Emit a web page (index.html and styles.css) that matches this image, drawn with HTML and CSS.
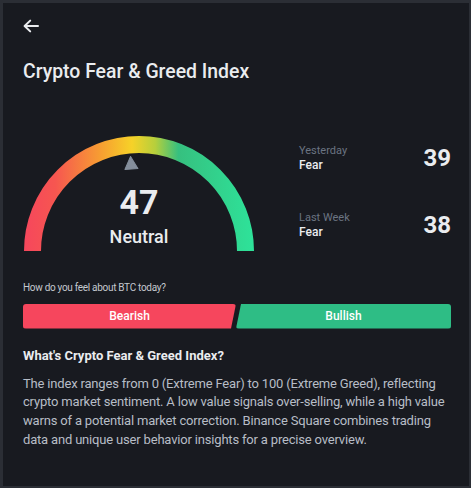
FILE: index.html
```html
<!DOCTYPE html>
<html lang="en">
<head>
<meta charset="utf-8">
<title>Crypto Fear &amp; Greed Index</title>
<link rel="stylesheet" href="styles.css">
</head>
<body>
<div class="card">
  <svg class="back" width="16" height="14" viewBox="0 0 16 14" aria-label="Back">
    <path d="M15 7H2M7.2 1.6L1.6 7l5.6 5.4" fill="none" stroke="#eaecef" stroke-width="2" stroke-linecap="round" stroke-linejoin="round"/>
  </svg>
  <h1 class="title">Crypto Fear &amp; Greed Index</h1>

  <div class="gauge-row">
    <div class="gauge">
      <svg class="gauge-arc" width="232" height="116" viewBox="0 0 232 116">
        <defs>
          <linearGradient id="g" x1="0" y1="0" x2="232" y2="0" gradientUnits="userSpaceOnUse">
            <stop offset="0" stop-color="#f6465d"/>
            <stop offset="0.14" stop-color="#f65650"/>
            <stop offset="0.34" stop-color="#f7a031"/>
            <stop offset="0.47" stop-color="#f6d228"/>
            <stop offset="0.57" stop-color="#b6cf3c"/>
            <stop offset="0.67" stop-color="#36c07f"/>
            <stop offset="1" stop-color="#2ee39a"/>
          </linearGradient>
        </defs>
        <path d="M9.5 115 A106.5 106.5 0 0 1 222.5 115" fill="none" stroke="url(#g)" stroke-width="17"/>
        <polygon points="108,20.5 114.5,33 101.5,33" fill="#848e9c" stroke="#848e9c" stroke-width="1" stroke-linejoin="round" transform="rotate(-4 108 27)"/>
      </svg>
      <div class="gauge-text">
        <div class="gauge-value">47</div>
        <div class="gauge-label">Neutral</div>
      </div>
    </div>

    <div class="history">
      <div class="hist-row">
        <div class="hist-text">
          <div class="hist-label">Yesterday</div>
          <div class="hist-state">Fear</div>
        </div>
        <div class="hist-value">39</div>
      </div>
      <div class="hist-row">
        <div class="hist-text">
          <div class="hist-label">Last Week</div>
          <div class="hist-state">Fear</div>
        </div>
        <div class="hist-value">38</div>
      </div>
    </div>
  </div>

  <p class="question">How do you feel about BTC today?</p>
  <div class="vote">
    <button class="btn bearish">Bearish</button>
    <button class="btn bullish">Bullish</button>
  </div>

  <h2 class="subtitle">What's Crypto Fear &amp; Greed Index?</h2>
  <p class="desc">The index ranges from 0 (Extreme Fear) to 100 (Extreme Greed), reflecting crypto market sentiment. A low value signals over-selling, while a high value warns of a potential market correction. Binance Square combines trading data and unique user behavior insights for a precise overview.</p>
</div>
</body>
</html>
```

FILE: styles.css
```css
* { box-sizing: border-box; }
html, body { height: 100%; }
body {
  margin: 0;
  background: #2b2e35;
  padding: 3px 2px 2px 3px;
  font-family: Roboto, "Noto Sans", sans-serif;
  color: #eaecef;
}
.card {
  height: 100%;
  background: #181a20;
  padding: 16px 18px 0 20px;
}
.back { display: block; }
.title {
  margin: 27px 0 0;
  font-size: 19.4px;
  line-height: 24px;
  font-weight: 500;
  color: #eaecef;
}
.gauge-row {
  display: flex;
  margin-top: 52px;
}
.gauge {
  display: grid;
  width: 232px;
}
.gauge-arc, .gauge-text { grid-area: 1 / 1; }
.gauge-arc { display: block; }
.gauge-text {
  padding-top: 48px;
  text-align: center;
}
.gauge-value {
  font-size: 34px;
  line-height: 36px;
  font-weight: 700;
}
.gauge-label {
  margin-top: 5.5px;
  font-size: 18px;
  line-height: 22px;
  font-weight: 500;
}
.history {
  margin-left: 44px;
  width: 152px;
  padding-top: 8px;
  display: flex;
  flex-direction: column;
  gap: 39px;
}
.hist-row {
  display: flex;
  align-items: center;
  justify-content: space-between;
  height: 28px;
}
.hist-label {
  font-size: 11px;
  line-height: 14px;
  color: #6b7482;
}
.hist-state {
  font-size: 12px;
  line-height: 14px;
  font-weight: 500;
}
.hist-value {
  font-size: 24px;
  line-height: 28px;
  font-weight: 700;
}
.question {
  margin: 28.5px 0 0;
  font-size: 10px;
  line-height: 14px;
  letter-spacing: -0.3px;
  color: #c4c8cf;
}
.vote {
  display: flex;
  margin-top: 9.5px;
  width: 428px;
}
.btn {
  border: 0;
  height: 24.5px;
  border-radius: 3px;
  font-family: inherit;
  font-size: 12px;
  font-weight: 500;
  color: #ffffff;
  padding: 0;
}
.bearish {
  width: 213px;
  background: #f6465d;
  clip-path: polygon(0 0, 100% 0, calc(100% - 5px) 100%, 0 100%);
}
.bullish {
  flex: 1;
  background: #2ebd85;
  clip-path: polygon(5px 0, 100% 0, 100% 100%, 0 100%);
}
.subtitle {
  margin: 18.5px 0 0;
  font-size: 13px;
  line-height: 18px;
  font-weight: 700;
  color: #eaecef;
}
.desc {
  margin: 9.5px 0 0;
  width: 430px;
  font-size: 13px;
  line-height: 18.7px;
  letter-spacing: -0.18px;
  color: #b7bdc6;
}
```
